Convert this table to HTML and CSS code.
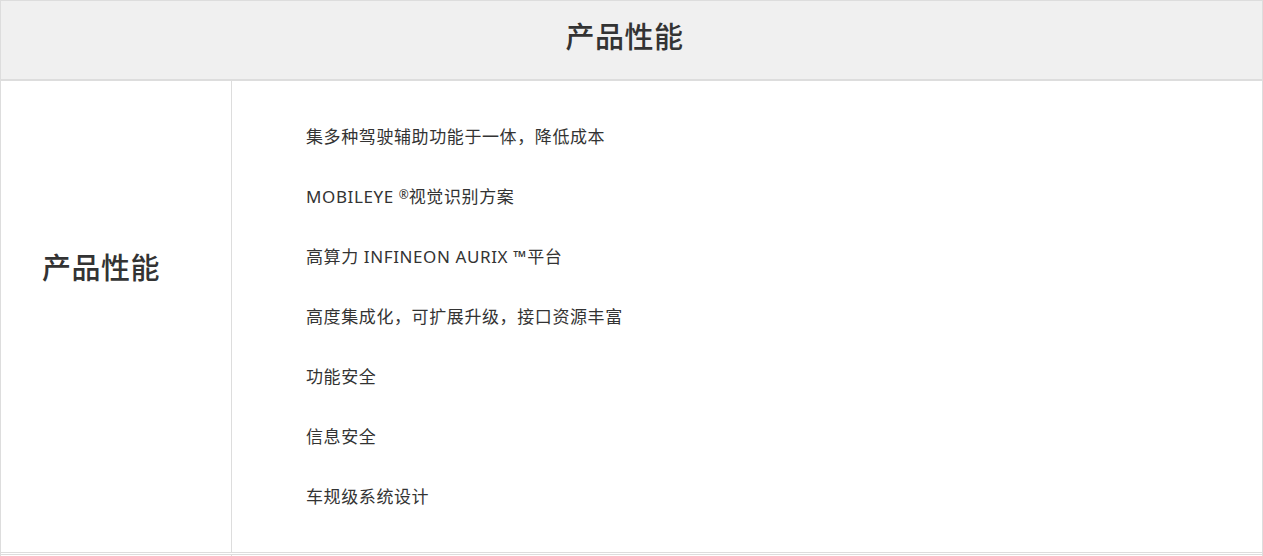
FILE: index.html
```html
<!DOCTYPE html>
<html lang="zh-CN">
<head>
<meta charset="utf-8">
<title>产品性能</title>
<link rel="stylesheet" href="styles.css">
</head>
<body>
<div class="spec">
  <div class="spec-head">产品性能</div>
  <div class="spec-row">
    <div class="spec-label">产品性能</div>
    <ul class="spec-list">
      <li>集多种驾驶辅助功能于一体，降低成本</li>
      <li>MOBILEYE <span class="mark">®</span>视觉识别方案</li>
      <li>高算力 INFINEON AURIX <span class="tm">™</span>平台</li>
      <li>高度集成化，可扩展升级，接口资源丰富</li>
      <li>功能安全</li>
      <li>信息安全</li>
      <li>车规级系统设计</li>
    </ul>
  </div>
  <div class="spec-row spec-next">
    <div class="spec-label"></div>
    <div class="spec-list"></div>
  </div>
</div>
</body>
</html>
```
FILE: styles.css
```css
html, body {
  margin: 0;
  padding: 0;
  background: #fff;
}
body {
  font-family: "Noto Sans CJK SC", "Noto Sans", sans-serif;
  color: #333;
}
.spec {
  width: 1263px;
  box-sizing: border-box;
  border-left: 1px solid #ddd;
  border-right: 1px solid #ddd;
}
.spec-head {
  height: 81px;
  box-sizing: border-box;
  border-top: 1px solid #ddd;
  border-bottom: 2px solid #ddd;
  background: #f0f0f0;
  font-size: 29px;
  font-weight: 500;
  letter-spacing: 0.5px;
  line-height: 40px;
  padding-top: 14px;
  padding-right: 14px;
  text-align: center;
}
.spec-row {
  display: flex;
  border-bottom: 1px solid #ddd;
}
.spec-label {
  width: 231px;
  flex: none;
  border-right: 1px solid #ddd;
  font-size: 29px;
  font-weight: 500;
  letter-spacing: 0.5px;
  line-height: 40px;
  padding: 165px 0 0 41px;
  box-sizing: border-box;
}
.spec-list {
  list-style: none;
  margin: 0;
  padding: 46px 0 45px 74px;
  display: flex;
  flex-direction: column;
  gap: 40px;
  font-family: "Noto Sans", "Noto Sans CJK SC", sans-serif;
  font-size: 17px;
  letter-spacing: 0.6px;
  line-height: 20px;
}
.spec-list li {
  margin: 0;
  height: 20px;
}
.mark {
  font-size: 12px;
  line-height: 0;
  position: relative;
  top: -4px;
  letter-spacing: 0;
}
.tm {
  line-height: 0;
  letter-spacing: 1px;
}
.spec-next {
  margin-top: 1px;
  border-top: 1px solid #ddd;
  height: 20px;
}
```
